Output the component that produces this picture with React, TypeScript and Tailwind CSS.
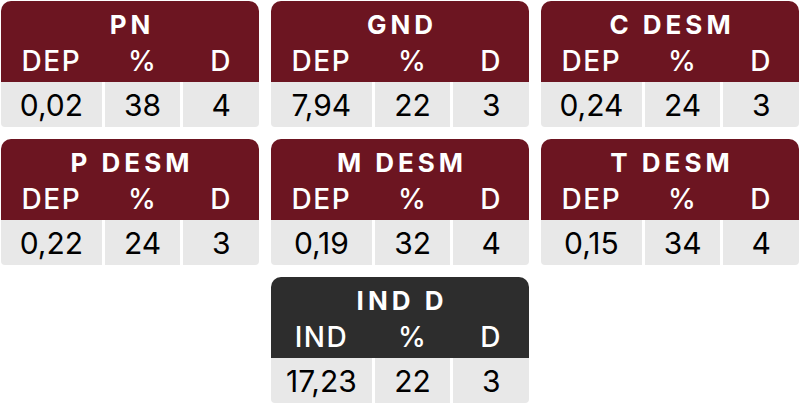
import React from "react";

type Card = { title: string; cols: [string, string, string]; vals: [string, string, string]; dark?: boolean };

const cards: Card[] = [
  { title: "PN", cols: ["DEP", "%", "D"], vals: ["0,02", "38", "4"] },
  { title: "GND", cols: ["DEP", "%", "D"], vals: ["7,94", "22", "3"] },
  { title: "C DESM", cols: ["DEP", "%", "D"], vals: ["0,24", "24", "3"] },
  { title: "P DESM", cols: ["DEP", "%", "D"], vals: ["0,22", "24", "3"] },
  { title: "M DESM", cols: ["DEP", "%", "D"], vals: ["0,19", "32", "4"] },
  { title: "T DESM", cols: ["DEP", "%", "D"], vals: ["0,15", "34", "4"] },
  { title: "IND D", cols: ["IND", "%", "D"], vals: ["17,23", "22", "3"], dark: true },
];

function CardView({ c, className }: { c: Card; className?: string }) {
  return (
    <div className={"flex flex-col " + (className ?? "")}>
      <div
        className={
          "h-[81px] rounded-t-[10px] flex flex-col text-white " +
          (c.dark ? "bg-[#2d2d2d]" : "bg-[#6c1521]")
        }
      >
        <div className="h-[46px] flex items-center justify-center pt-[2px] text-[26px] font-bold tracking-[4px] leading-none pl-[4px]">
          {c.title}
        </div>
        <div className="grid grid-cols-[4fr_3fr_3fr] gap-[3px] text-[28px] font-medium leading-none tracking-[1.5px]">
          {c.cols.map((t, i) => (
            <div key={i} className="flex justify-center">
              {t}
            </div>
          ))}
        </div>
      </div>
      <div className="h-[45px] grid grid-cols-[4fr_3fr_3fr] gap-[3px] text-[30px] leading-none text-black">
        {c.vals.map((v, i) => (
          <div
            key={i}
            className={
              "bg-[#e8e8e8] flex items-center justify-center " +
              (i === 0 ? "rounded-bl-[4px]" : i === 2 ? "rounded-br-[4px]" : "")
            }
          >
            {v}
          </div>
        ))}
      </div>
    </div>
  );
}

export default function App() {
  return (
    <div
      className="w-[800px] h-[416px] bg-white p-px overflow-hidden"
      style={{ fontFamily: 'Inter, "Liberation Sans", Arial, sans-serif' }}
    >
      <div className="grid grid-cols-3 gap-3">
        {cards.map((c, i) => (
          <CardView key={i} c={c} className={i === 6 ? "col-start-2" : ""} />
        ))}
      </div>
    </div>
  );
}
